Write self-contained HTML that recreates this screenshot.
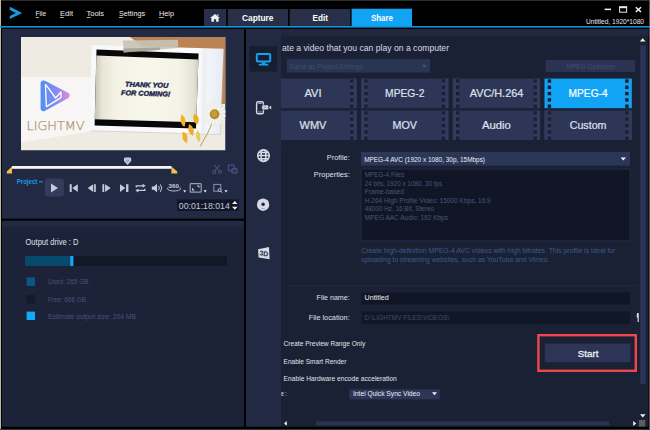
<!DOCTYPE html>
<html>
<head>
<meta charset="utf-8">
<title>Share</title>
<style>
html,body{margin:0;padding:0;background:#000;}
body{width:650px;height:430px;overflow:hidden;}
svg{display:block;}
svg text{font-family:"Liberation Sans",sans-serif;}
</style>
</head>
<body>
<svg width="650" height="430" viewBox="0 0 650 430">
<defs>
<linearGradient id="lg" gradientUnits="userSpaceOnUse" x1="40" y1="95" x2="72" y2="95"><stop offset="0" stop-color="#4b8ef6"/><stop offset="0.55" stop-color="#8c8cf0"/><stop offset="1" stop-color="#f58ccf"/></linearGradient>
<linearGradient id="scr" x1="0" y1="0" x2="1" y2="0"><stop offset="0" stop-color="#c4c4b6"/><stop offset="0.07" stop-color="#e6e5d6"/><stop offset="0.2" stop-color="#f3f2e4"/><stop offset="0.5" stop-color="#f8f7ec"/><stop offset="0.82" stop-color="#f3f2e4"/><stop offset="0.95" stop-color="#e4e3d5"/><stop offset="1" stop-color="#cdcdbf"/></linearGradient>
<linearGradient id="frm" x1="0" y1="0" x2="1" y2="0"><stop offset="0" stop-color="#f7f8fa"/><stop offset="0.8" stop-color="#fbfbfc"/><stop offset="1" stop-color="#e6ebf3"/></linearGradient>
<clipPath id="pv"><rect x="21" y="37" width="204.5" height="113.5"/></clipPath>
<clipPath id="mainclip"><rect x="281" y="29" width="358.5" height="398"/></clipPath>
</defs>

<rect x="0.0" y="0.0" width="650.0" height="430.0" fill="#000"/>
<rect x="0.0" y="0.0" width="650.0" height="1.0" fill="#2e2e2e"/>
<rect x="0.0" y="0.0" width="1.0" height="430.0" fill="#bdb9a8"/>
<rect x="649.0" y="0.0" width="1.0" height="430.0" fill="#55554f"/>
<rect x="0.0" y="429.0" width="650.0" height="1.0" fill="#333333"/>
<rect x="0.0" y="26.0" width="650.0" height="1.6" fill="#1192dc"/>
<path d="M9.8 6.8 L22.2 12.9 L9.8 19.1 L9.8 15.9 L15.9 12.9 L9.8 10 Z" fill="#149ce8"/>
<text x="35.5" y="16.4" font-size="7.6" fill="#ececec" text-anchor="start" textLength="10.7" lengthAdjust="spacingAndGlyphs">File</text>
<rect x="35.6" y="17.3" width="3.4" height="0.7" fill="#ececec"/>
<text x="60.0" y="16.4" font-size="7.6" fill="#ececec" text-anchor="start" textLength="13.0" lengthAdjust="spacingAndGlyphs">Edit</text>
<rect x="60.0" y="17.3" width="3.8" height="0.7" fill="#ececec"/>
<text x="86.5" y="16.4" font-size="7.6" fill="#ececec" text-anchor="start" textLength="17.5" lengthAdjust="spacingAndGlyphs">Tools</text>
<rect x="86.5" y="17.3" width="4.1" height="0.7" fill="#ececec"/>
<text x="119.0" y="16.4" font-size="7.6" fill="#ececec" text-anchor="start" textLength="26.0" lengthAdjust="spacingAndGlyphs">Settings</text>
<rect x="119.0" y="17.3" width="4.2" height="0.7" fill="#ececec"/>
<text x="159.0" y="16.4" font-size="7.6" fill="#ececec" text-anchor="start" textLength="15.0" lengthAdjust="spacingAndGlyphs">Help</text>
<rect x="159.0" y="17.3" width="4.8" height="0.7" fill="#ececec"/>
<rect x="204.0" y="9.0" width="22.2" height="17.0" fill="#283049"/>
<rect x="227.8" y="9.0" width="60.2" height="17.0" fill="#283049"/>
<rect x="289.7" y="9.0" width="60.6" height="17.0" fill="#283049"/>
<rect x="351.6" y="8.7" width="60.4" height="17.5" fill="#12a4f4"/>
<path d="M215 13.9 L219.9 18 L218.6 18 L218.6 21.7 L216.1 21.7 L216.1 19.3 L213.9 19.3 L213.9 21.7 L211.4 21.7 L211.4 18 L210.1 18 Z M217.2 14.3 h1.2 v1.9 l-1.2 -1z" fill="#eceef3"/>
<text x="242.0" y="20.6" font-size="9" fill="#ffffff" font-weight="bold" text-anchor="start" textLength="31.5" lengthAdjust="spacingAndGlyphs">Capture</text>
<text x="312.6" y="20.6" font-size="9" fill="#ffffff" font-weight="bold" text-anchor="start" textLength="15.4" lengthAdjust="spacingAndGlyphs">Edit</text>
<text x="371.0" y="20.6" font-size="9" fill="#ffffff" font-weight="bold" text-anchor="start" textLength="22.0" lengthAdjust="spacingAndGlyphs">Share</text>
<rect x="604.6" y="8.6" width="6.4" height="1.5" fill="#f0f0f0"/>
<rect x="619.6" y="7" width="7" height="5.2" fill="none" stroke="#e8e8e8" stroke-width="1"/>
<rect x="619.1" y="6.3" width="8.0" height="1.9" fill="#e8e8e8"/>
<path d="M635.8 7.2 L641 12 M641 7.2 L635.8 12" stroke="#f4f4f4" stroke-width="1.5" fill="none"/>
<text x="586.0" y="24.0" font-size="7.5" fill="#e8e8e8" text-anchor="start" textLength="58.0" lengthAdjust="spacingAndGlyphs">Untitled, 1920*1080</text>
<rect x="2.0" y="29.0" width="242.0" height="189.7" fill="#212943"/>
<rect x="2.0" y="220.8" width="242.0" height="206.0" fill="#1c2238"/>
<rect x="2.0" y="220.8" width="242.0" height="5.2" fill="#212943"/>
<rect x="2.0" y="226.0" width="242.0" height="1.6" fill="#1f2640"/>
<rect x="246.0" y="29.0" width="35.0" height="397.8" fill="#222a43"/>
<rect x="281.0" y="29.0" width="367.5" height="397.8" fill="#1b2135"/>
<rect x="281.0" y="29.0" width="367.5" height="6.6" fill="#20273e"/>
<g clip-path="url(#pv)">
<rect x="21.0" y="37.0" width="204.5" height="113.5" fill="#eeebe3"/>
<polygon points="130,37 225.5,37 225.5,104 200,104 150,52" fill="#ba8355"/>
<polygon points="21,77 93,77 93,131 21,142.5" fill="#f7f6f4"/>
<polygon points="92.5,46 224,49.7 221,135 90.7,131.2" fill="#c9c6bc" opacity="0.6"/>
<polygon points="91.5,45 223.4,48.7 220,133.9 89.7,130.2" fill="url(#frm)"/><polygon points="203,48.2 207,48.3 205,133.4 201,133.3" fill="#e3e8f1" opacity="0.5"/>
<polygon points="96.5,49.5 198.6,53.6 196,128.4 94.6,125.6" fill="#070707"/>
<polygon points="96.3,55.6 198.4,59.5 196.3,122.3 94.8,119.2" fill="url(#scr)"/>
<polygon points="123,40.6 178,39.8 178.2,48 123.6,52.6" fill="#c9c3b4" opacity="0.9"/><polygon points="123.4,48.6 160,47.4 160,50 123.6,52.6" fill="#9f9b90" opacity="0.8"/>
<g transform="rotate(1.7 146 90)">
<text x="125.0" y="87.2" font-size="6.9" fill="#1b1e4c" font-weight="bold" text-anchor="start" textLength="43.2" lengthAdjust="spacingAndGlyphs" font-style="italic" stroke="#1b1e4c" stroke-width="0.4">THANK YOU</text>
<text x="121.2" y="95.8" font-size="6.9" fill="#1b1e4c" font-weight="bold" text-anchor="start" textLength="49.2" lengthAdjust="spacingAndGlyphs" font-style="italic" stroke="#1b1e4c" stroke-width="0.4">FOR COMING!</text>
</g>
<path d="M213.5 120 Q208 134 200 146.5" stroke="#a89a5a" stroke-width="0.9" fill="none"/>
<g transform="translate(214.6 114.2)">
<ellipse cx="0" cy="-7.8" rx="1.5" ry="4.6" fill="#f4f3ee" stroke="#d9d8d0" stroke-width="0.25" transform="rotate(8)"/>
<ellipse cx="0" cy="-7.8" rx="1.5" ry="4.6" fill="#f4f3ee" stroke="#d9d8d0" stroke-width="0.25" transform="rotate(30)"/>
<ellipse cx="0" cy="-7.8" rx="1.5" ry="4.6" fill="#f4f3ee" stroke="#d9d8d0" stroke-width="0.25" transform="rotate(53)"/>
<ellipse cx="0" cy="-7.8" rx="1.5" ry="4.6" fill="#f4f3ee" stroke="#d9d8d0" stroke-width="0.25" transform="rotate(76)"/>
<ellipse cx="0" cy="-7.8" rx="1.5" ry="4.6" fill="#f4f3ee" stroke="#d9d8d0" stroke-width="0.25" transform="rotate(98)"/>
<ellipse cx="0" cy="-7.8" rx="1.5" ry="4.6" fill="#f4f3ee" stroke="#d9d8d0" stroke-width="0.25" transform="rotate(120)"/>
<ellipse cx="0" cy="-7.8" rx="1.5" ry="4.6" fill="#f4f3ee" stroke="#d9d8d0" stroke-width="0.25" transform="rotate(143)"/>
<ellipse cx="0" cy="-7.8" rx="1.5" ry="4.6" fill="#f4f3ee" stroke="#d9d8d0" stroke-width="0.25" transform="rotate(166)"/>
<ellipse cx="0" cy="-7.8" rx="1.5" ry="4.6" fill="#f4f3ee" stroke="#d9d8d0" stroke-width="0.25" transform="rotate(188)"/>
<ellipse cx="0" cy="-7.8" rx="1.5" ry="4.6" fill="#f4f3ee" stroke="#d9d8d0" stroke-width="0.25" transform="rotate(210)"/>
<ellipse cx="0" cy="-7.8" rx="1.5" ry="4.6" fill="#f4f3ee" stroke="#d9d8d0" stroke-width="0.25" transform="rotate(233)"/>
<ellipse cx="0" cy="-7.8" rx="1.5" ry="4.6" fill="#f4f3ee" stroke="#d9d8d0" stroke-width="0.25" transform="rotate(256)"/>
<ellipse cx="0" cy="-7.8" rx="1.5" ry="4.6" fill="#f4f3ee" stroke="#d9d8d0" stroke-width="0.25" transform="rotate(278)"/>
<ellipse cx="0" cy="-7.8" rx="1.5" ry="4.6" fill="#f4f3ee" stroke="#d9d8d0" stroke-width="0.25" transform="rotate(300)"/>
<ellipse cx="0" cy="-7.8" rx="1.5" ry="4.6" fill="#f4f3ee" stroke="#d9d8d0" stroke-width="0.25" transform="rotate(323)"/>
<ellipse cx="0" cy="-7.8" rx="1.5" ry="4.6" fill="#f4f3ee" stroke="#d9d8d0" stroke-width="0.25" transform="rotate(346)"/>
<ellipse cx="0" cy="0" rx="4.8" ry="5" fill="#b58a2c"/><ellipse cx="-0.4" cy="-0.5" rx="2.9" ry="3.1" fill="#c89d38"/>
</g>
<path d="M0 -6.5 Q4.8 -0.975 0 6.5 Q-4.8 0.975 0 -6.5Z" fill="#f3b321" transform="translate(183 120.6) rotate(-12)"/>
<path d="M0 -5.6 Q5.6 -0.84 0 5.6 Q-5.6 0.84 0 -5.6Z" fill="#f2ab1f" transform="translate(196 119) rotate(-18)"/>
<path d="M0 -6.2 Q5.2 -0.9299999999999999 0 6.2 Q-5.2 0.9299999999999999 0 -6.2Z" fill="#f2ab1f" transform="translate(191 130) rotate(-18)"/>
<path d="M0 -6.2 Q5.2 -0.9299999999999999 0 6.2 Q-5.2 0.9299999999999999 0 -6.2Z" fill="#f3b021" transform="translate(185 137.4) rotate(-18)"/>
<path d="M0 -6.2 Q4.4 -0.9299999999999999 0 6.2 Q-4.4 0.9299999999999999 0 -6.2Z" fill="#efc75a" transform="translate(198.3 136) rotate(-10)"/>
<polygon points="43.6,83.4 66.6,95.5 43.6,108.2" fill="url(#lg)" stroke="url(#lg)" stroke-width="6" stroke-linejoin="round"/>
<path d="M45.4 84.2 L46.4 106.6 L61 97.6 L61 92 L55.6 98 L45.4 84.2" fill="none" stroke="#ffffff" stroke-width="1.3" stroke-linejoin="round"/>
<text x="26.5" y="129.6" font-size="12.2" fill="#b1946d" font-weight="200" text-anchor="start" textLength="58.1" lengthAdjust="spacingAndGlyphs" style="font-family:'DejaVu Sans',sans-serif;font-weight:200" stroke="#b1946d" stroke-width="0.25">LIGHTMV</text>
</g>
<rect x="12.0" y="166.0" width="159.5" height="2.8" fill="#f4f4f4"/>
<polygon points="12,166.6 12,173.6 6.8,173.6 6.8,171.4" fill="#f3bf4c"/>
<polygon points="171.4,166.6 177.2,171.4 177.2,173.6 171.4,173.6" fill="#f3bf4c"/>
<path d="M124 158.8 Q124 157.6 125.2 157.6 L129.8 157.6 Q131.2 157.6 131.2 158.8 L131.2 161 L127.6 165 L124 161 Z" fill="#c9cde0"/>
<path d="M125.6 159.6 L129.6 159.6 L129.6 160.8 L127.6 163 L125.6 160.8 Z" fill="#9ea4bf"/>
<g stroke="#43527e" fill="none" stroke-width="1.1"><path d="M214.2 165 L219 171 M219.6 165 L215 170.6"/><circle cx="214.2" cy="172" r="1.5"/><circle cx="220" cy="171.8" r="1.5"/></g>
<g stroke="#43527e" fill="none" stroke-width="1.2"><rect x="228.4" y="165.2" width="6" height="5.6" rx="0.8"/><rect x="232" y="168.6" width="5" height="4.6" rx="0.8" fill="#2b3657"/></g>
<text x="16.7" y="183.6" font-size="7" fill="#1a9be8" font-weight="bold" text-anchor="start" textLength="20.7" lengthAdjust="spacingAndGlyphs">Project</text>
<rect x="39.0" y="181.2" width="3.6" height="1.1" fill="#1a9be8"/>
<rect x="44.8" y="178.6" width="19.2" height="18" rx="3" fill="#323c5d"/>
<polygon points="51,183.6 58,188 51,192.6" fill="#c6cbd9"/>
<rect x="69.7" y="184.2" width="2.0" height="7.8" fill="#c6cbd9"/>
<polygon points="77.8,184.2 77.8,192 72.3,188.1" fill="#c6cbd9"/>
<polygon points="93.2,184.2 93.2,192 87.7,188.1" fill="#c6cbd9"/>
<rect x="94.1" y="184.2" width="1.7" height="7.8" fill="#c6cbd9"/>
<rect x="102.4" y="184.2" width="1.8" height="7.8" fill="#c6cbd9"/>
<polygon points="105.1,184.2 105.1,192 110.7,188.1" fill="#c6cbd9"/>
<polygon points="120,184.2 120,192 125.4,188.1" fill="#c6cbd9"/>
<rect x="126.1" y="184.2" width="2.3" height="7.8" fill="#c6cbd9"/>
<g fill="none" stroke="#c6cbd9" stroke-width="1.3"><path d="M136.3 187.4 L136.3 185.8 L143.4 185.8"/><path d="M144.8 188.8 L144.8 190.4 L137.6 190.4"/></g>
<polygon points="142.6,183.8 145.6,185.8 142.6,187.8" fill="#c6cbd9"/><polygon points="138.4,188.4 135.4,190.4 138.4,192.4" fill="#c6cbd9"/>
<polygon points="151.8,186.4 154,186.4 157,183.8 157,192.4 154,189.8 151.8,189.8" fill="#c6cbd9"/>
<g fill="none" stroke="#c6cbd9" stroke-width="1"><path d="M158.6 186 Q160 188.1 158.6 190.2"/><path d="M160.4 184.4 Q163 188.1 160.4 191.8"/></g>
<ellipse cx="174" cy="188.6" rx="6.6" ry="2.4" fill="none" stroke="#c6cbd9" stroke-width="0.9"/>
<rect x="168.4" y="183.4" width="11.2" height="5.0" fill="#212943"/>
<text x="168.6" y="188.2" font-size="5.6" fill="#c6cbd9" font-weight="bold" text-anchor="start" textLength="10.4" lengthAdjust="spacingAndGlyphs">360</text>
<polygon points="183.2,190.2 186.2,190.2 184.7,192.6" fill="#eceef4"/>
<rect x="190.2" y="183.6" width="11" height="8.6" rx="0.8" fill="none" stroke="#979eb5" stroke-width="1.2"/>
<polygon points="196.6,185.4 199.4,185.4 199.4,188" fill="#c6cbd9"/><polygon points="192,187.8 192,190.4 194.8,190.4" fill="#c6cbd9"/>
<polygon points="203.6,190.2 206.8,190.2 205.2,192.6" fill="#eceef4"/>
<rect x="213.8" y="184.4" width="7" height="6.8" fill="none" stroke="#8d94ad" stroke-width="1"/>
<circle cx="219.6" cy="190" r="1.5" fill="#212943" stroke="#c6cbd9" stroke-width="0.9"/><path d="M220.6 191 L222.4 192.8" stroke="#c6cbd9" stroke-width="1"/>
<polygon points="224.4,190.2 227.6,190.2 226,192.6" fill="#eceef4"/>
<rect x="177.0" y="199.4" width="61.6" height="11.6" fill="#11162a"/>
<text x="178.8" y="208.8" font-size="8.6" fill="#c3c9d9" text-anchor="start" textLength="51.0" lengthAdjust="spacingAndGlyphs">00:01:18:014</text>
<polygon points="232,204 237.6,204 234.8,201" fill="#f0f0f0"/><polygon points="232,206.8 237.6,206.8 234.8,209.8" fill="#f0f0f0"/>
<text x="25.5" y="244.6" font-size="8.2" fill="#dfe2ea" text-anchor="start" textLength="52.9" lengthAdjust="spacingAndGlyphs">Output drive : D</text>
<rect x="25.0" y="256.0" width="202.0" height="10.0" fill="#131829"/>
<rect x="25.0" y="256.0" width="45.2" height="10.0" fill="#064a6b"/>
<rect x="70.2" y="256.0" width="3.2" height="10.0" fill="#14a9f6"/>
<rect x="26.6" y="277.4" width="8.4" height="8.6" fill="#0a587f"/>
<rect x="26.6" y="295.0" width="8.4" height="8.4" fill="#141a2d"/>
<rect x="26.6" y="311.6" width="8.4" height="8.4" fill="#14a9f6"/>
<text x="48.0" y="284.4" font-size="7" fill="#46527a" text-anchor="start" textLength="40.6" lengthAdjust="spacingAndGlyphs">Used:  265 GB</text>
<text x="48.0" y="301.6" font-size="7" fill="#46527a" text-anchor="start" textLength="38.0" lengthAdjust="spacingAndGlyphs">Free:  666 GB</text>
<text x="48.0" y="318.6" font-size="7" fill="#46527a" text-anchor="start" textLength="88.0" lengthAdjust="spacingAndGlyphs">Estimate output size:  204 MB</text>
<rect x="249.4" y="46.0" width="27.8" height="25.6" fill="#181d30"/>
<rect x="256.8" y="54" width="13.4" height="7.6" rx="1" fill="none" stroke="#12a4f4" stroke-width="2"/>
<path d="M261.8 62.4 h3.4 l0.6 1.5 h2.4 v1.7 h-9.4 v-1.7 h2.4z" fill="#12a4f4"/>
<rect x="256.6" y="101.8" width="6.8" height="12" rx="1.6" fill="none" stroke="#d6dae6" stroke-width="1.4"/>
<rect x="258.2" y="103.2" width="3.6" height="0.7" fill="#d6dae6"/>
<rect x="258.2" y="111.6" width="3.6" height="0.7" fill="#d6dae6"/>
<rect x="261.8" y="105" width="6.8" height="4.8" rx="1" fill="#d6dae6" stroke="#222a43" stroke-width="0.6"/>
<polygon points="268.8,107.4 271.2,105.4 271.2,109.4" fill="#d6dae6"/>
<rect x="263.6" y="106.8" width="3.0" height="1.0" fill="#8f95aa"/>
<g fill="none" stroke="#d6dae6" stroke-width="1.5"><circle cx="263.5" cy="155.6" r="5.8"/><ellipse cx="263.5" cy="155.6" rx="2.4" ry="5.9"/><path d="M257.6 155.6 h11.8 M258.6 152.4 h9.8 M258.6 158.8 h9.8"/></g>
<circle cx="263.1" cy="204.7" r="6.2" fill="#d6dae6"/><circle cx="263.1" cy="204.2" r="1.7" fill="#1c2238"/>
<rect x="261.4" y="208.0" width="3.4" height="0.9" fill="#9aa0b5"/>
<polygon points="258,249.2 269,247 269.6,259.2 258.6,257.4" fill="#d6dae6"/>
<text x="259.6" y="256.0" font-size="7" fill="#222a43" font-weight="bold" text-anchor="start" textLength="8.6" lengthAdjust="spacingAndGlyphs" transform="rotate(8 264 253)">3D</text>
<g clip-path="url(#mainclip)">
<text x="282.0" y="50.8" font-size="8.8" fill="#d8dce7" text-anchor="start" textLength="167.0" lengthAdjust="spacingAndGlyphs">ate a video that you can play on a computer</text>
<rect x="287.0" y="59.0" width="143.0" height="13.6" fill="#2a3453"/>
<text x="289.6" y="69.2" font-size="7.8" fill="#404c72" text-anchor="start" textLength="73.0" lengthAdjust="spacingAndGlyphs">Same as Project Settings</text>
<polygon points="422,64.8 426.6,64.8 424.3,68" fill="#46527a"/>
<rect x="545.6" y="60.0" width="89.6" height="12.0" fill="#2a3352"/>
<text x="566.4" y="69.0" font-size="7.8" fill="#414d71" text-anchor="start" textLength="49.4" lengthAdjust="spacingAndGlyphs">MPEG Optimizer</text>
<rect x="269.4" y="78.6" width="87.3" height="29.6" fill="#2d3657"/>
<rect x="269.4" y="78.6" width="6.6" height="29.6" fill="#323b5c"/>
<rect x="350.1" y="78.6" width="6.6" height="29.6" fill="#323b5c"/>
<rect x="272.6" y="79.3" width="3.4" height="3.4" fill="#1a2034"/>
<rect x="350.1" y="79.3" width="3.4" height="3.4" fill="#1a2034"/>
<rect x="272.6" y="85.6" width="3.4" height="3.4" fill="#1a2034"/>
<rect x="350.1" y="85.6" width="3.4" height="3.4" fill="#1a2034"/>
<rect x="272.6" y="91.9" width="3.4" height="3.4" fill="#1a2034"/>
<rect x="350.1" y="91.9" width="3.4" height="3.4" fill="#1a2034"/>
<rect x="272.6" y="98.2" width="3.4" height="3.4" fill="#1a2034"/>
<rect x="350.1" y="98.2" width="3.4" height="3.4" fill="#1a2034"/>
<rect x="272.6" y="104.5" width="3.4" height="3.4" fill="#1a2034"/>
<rect x="350.1" y="104.5" width="3.4" height="3.4" fill="#1a2034"/>
<text x="313.0" y="96.9" font-size="10.2" fill="#dee1eb" text-anchor="middle" textLength="17.0" lengthAdjust="spacingAndGlyphs" stroke="#dee1eb" stroke-width="0.2">AVI</text>
<rect x="361.1" y="78.6" width="87.3" height="29.6" fill="#2d3657"/>
<rect x="361.1" y="78.6" width="6.6" height="29.6" fill="#323b5c"/>
<rect x="441.8" y="78.6" width="6.6" height="29.6" fill="#323b5c"/>
<rect x="364.3" y="79.3" width="3.4" height="3.4" fill="#1a2034"/>
<rect x="441.8" y="79.3" width="3.4" height="3.4" fill="#1a2034"/>
<rect x="364.3" y="85.6" width="3.4" height="3.4" fill="#1a2034"/>
<rect x="441.8" y="85.6" width="3.4" height="3.4" fill="#1a2034"/>
<rect x="364.3" y="91.9" width="3.4" height="3.4" fill="#1a2034"/>
<rect x="441.8" y="91.9" width="3.4" height="3.4" fill="#1a2034"/>
<rect x="364.3" y="98.2" width="3.4" height="3.4" fill="#1a2034"/>
<rect x="441.8" y="98.2" width="3.4" height="3.4" fill="#1a2034"/>
<rect x="364.3" y="104.5" width="3.4" height="3.4" fill="#1a2034"/>
<rect x="441.8" y="104.5" width="3.4" height="3.4" fill="#1a2034"/>
<text x="404.8" y="96.9" font-size="10.2" fill="#dee1eb" text-anchor="middle" textLength="39.4" lengthAdjust="spacingAndGlyphs" stroke="#dee1eb" stroke-width="0.2">MPEG-2</text>
<rect x="452.8" y="78.6" width="87.3" height="29.6" fill="#2d3657"/>
<rect x="452.8" y="78.6" width="6.6" height="29.6" fill="#323b5c"/>
<rect x="533.5" y="78.6" width="6.6" height="29.6" fill="#323b5c"/>
<rect x="456.0" y="79.3" width="3.4" height="3.4" fill="#1a2034"/>
<rect x="533.5" y="79.3" width="3.4" height="3.4" fill="#1a2034"/>
<rect x="456.0" y="85.6" width="3.4" height="3.4" fill="#1a2034"/>
<rect x="533.5" y="85.6" width="3.4" height="3.4" fill="#1a2034"/>
<rect x="456.0" y="91.9" width="3.4" height="3.4" fill="#1a2034"/>
<rect x="533.5" y="91.9" width="3.4" height="3.4" fill="#1a2034"/>
<rect x="456.0" y="98.2" width="3.4" height="3.4" fill="#1a2034"/>
<rect x="533.5" y="98.2" width="3.4" height="3.4" fill="#1a2034"/>
<rect x="456.0" y="104.5" width="3.4" height="3.4" fill="#1a2034"/>
<rect x="533.5" y="104.5" width="3.4" height="3.4" fill="#1a2034"/>
<text x="496.5" y="96.9" font-size="10.2" fill="#dee1eb" text-anchor="middle" textLength="53.5" lengthAdjust="spacingAndGlyphs" stroke="#dee1eb" stroke-width="0.2">AVC/H.264</text>
<rect x="544.5" y="78.6" width="87.3" height="29.6" fill="#12a4f4"/>
<rect x="547.7" y="79.3" width="3.4" height="3.4" fill="#161a2b"/>
<rect x="625.2" y="79.3" width="3.4" height="3.4" fill="#161a2b"/>
<rect x="547.7" y="85.6" width="3.4" height="3.4" fill="#161a2b"/>
<rect x="625.2" y="85.6" width="3.4" height="3.4" fill="#161a2b"/>
<rect x="547.7" y="91.9" width="3.4" height="3.4" fill="#161a2b"/>
<rect x="625.2" y="91.9" width="3.4" height="3.4" fill="#161a2b"/>
<rect x="547.7" y="98.2" width="3.4" height="3.4" fill="#161a2b"/>
<rect x="625.2" y="98.2" width="3.4" height="3.4" fill="#161a2b"/>
<rect x="547.7" y="104.5" width="3.4" height="3.4" fill="#161a2b"/>
<rect x="625.2" y="104.5" width="3.4" height="3.4" fill="#161a2b"/>
<text x="588.1" y="96.9" font-size="10.2" fill="#ffffff" text-anchor="middle" textLength="39.0" lengthAdjust="spacingAndGlyphs" stroke="#ffffff" stroke-width="0.2">MPEG-4</text>
<rect x="269.4" y="110.6" width="87.3" height="29.4" fill="#2d3657"/>
<rect x="269.4" y="110.6" width="6.6" height="29.4" fill="#323b5c"/>
<rect x="350.1" y="110.6" width="6.6" height="29.4" fill="#323b5c"/>
<rect x="272.6" y="111.3" width="3.4" height="3.4" fill="#1a2034"/>
<rect x="350.1" y="111.3" width="3.4" height="3.4" fill="#1a2034"/>
<rect x="272.6" y="117.6" width="3.4" height="3.4" fill="#1a2034"/>
<rect x="350.1" y="117.6" width="3.4" height="3.4" fill="#1a2034"/>
<rect x="272.6" y="123.9" width="3.4" height="3.4" fill="#1a2034"/>
<rect x="350.1" y="123.9" width="3.4" height="3.4" fill="#1a2034"/>
<rect x="272.6" y="130.2" width="3.4" height="3.4" fill="#1a2034"/>
<rect x="350.1" y="130.2" width="3.4" height="3.4" fill="#1a2034"/>
<rect x="272.6" y="136.5" width="3.4" height="3.4" fill="#1a2034"/>
<rect x="350.1" y="136.5" width="3.4" height="3.4" fill="#1a2034"/>
<text x="313.0" y="129.4" font-size="10.2" fill="#dee1eb" text-anchor="middle" textLength="26.8" lengthAdjust="spacingAndGlyphs" stroke="#dee1eb" stroke-width="0.2">WMV</text>
<rect x="361.1" y="110.6" width="87.3" height="29.4" fill="#2d3657"/>
<rect x="361.1" y="110.6" width="6.6" height="29.4" fill="#323b5c"/>
<rect x="441.8" y="110.6" width="6.6" height="29.4" fill="#323b5c"/>
<rect x="364.3" y="111.3" width="3.4" height="3.4" fill="#1a2034"/>
<rect x="441.8" y="111.3" width="3.4" height="3.4" fill="#1a2034"/>
<rect x="364.3" y="117.6" width="3.4" height="3.4" fill="#1a2034"/>
<rect x="441.8" y="117.6" width="3.4" height="3.4" fill="#1a2034"/>
<rect x="364.3" y="123.9" width="3.4" height="3.4" fill="#1a2034"/>
<rect x="441.8" y="123.9" width="3.4" height="3.4" fill="#1a2034"/>
<rect x="364.3" y="130.2" width="3.4" height="3.4" fill="#1a2034"/>
<rect x="441.8" y="130.2" width="3.4" height="3.4" fill="#1a2034"/>
<rect x="364.3" y="136.5" width="3.4" height="3.4" fill="#1a2034"/>
<rect x="441.8" y="136.5" width="3.4" height="3.4" fill="#1a2034"/>
<text x="404.8" y="129.4" font-size="10.2" fill="#dee1eb" text-anchor="middle" textLength="24.4" lengthAdjust="spacingAndGlyphs" stroke="#dee1eb" stroke-width="0.2">MOV</text>
<rect x="452.8" y="110.6" width="87.3" height="29.4" fill="#2d3657"/>
<rect x="452.8" y="110.6" width="6.6" height="29.4" fill="#323b5c"/>
<rect x="533.5" y="110.6" width="6.6" height="29.4" fill="#323b5c"/>
<rect x="456.0" y="111.3" width="3.4" height="3.4" fill="#1a2034"/>
<rect x="533.5" y="111.3" width="3.4" height="3.4" fill="#1a2034"/>
<rect x="456.0" y="117.6" width="3.4" height="3.4" fill="#1a2034"/>
<rect x="533.5" y="117.6" width="3.4" height="3.4" fill="#1a2034"/>
<rect x="456.0" y="123.9" width="3.4" height="3.4" fill="#1a2034"/>
<rect x="533.5" y="123.9" width="3.4" height="3.4" fill="#1a2034"/>
<rect x="456.0" y="130.2" width="3.4" height="3.4" fill="#1a2034"/>
<rect x="533.5" y="130.2" width="3.4" height="3.4" fill="#1a2034"/>
<rect x="456.0" y="136.5" width="3.4" height="3.4" fill="#1a2034"/>
<rect x="533.5" y="136.5" width="3.4" height="3.4" fill="#1a2034"/>
<text x="496.4" y="129.4" font-size="10.2" fill="#dee1eb" text-anchor="middle" textLength="28.8" lengthAdjust="spacingAndGlyphs" stroke="#dee1eb" stroke-width="0.2">Audio</text>
<rect x="544.5" y="110.6" width="87.3" height="29.4" fill="#2d3657"/>
<rect x="544.5" y="110.6" width="6.6" height="29.4" fill="#323b5c"/>
<rect x="625.2" y="110.6" width="6.6" height="29.4" fill="#323b5c"/>
<rect x="547.7" y="111.3" width="3.4" height="3.4" fill="#1a2034"/>
<rect x="625.2" y="111.3" width="3.4" height="3.4" fill="#1a2034"/>
<rect x="547.7" y="117.6" width="3.4" height="3.4" fill="#1a2034"/>
<rect x="625.2" y="117.6" width="3.4" height="3.4" fill="#1a2034"/>
<rect x="547.7" y="123.9" width="3.4" height="3.4" fill="#1a2034"/>
<rect x="625.2" y="123.9" width="3.4" height="3.4" fill="#1a2034"/>
<rect x="547.7" y="130.2" width="3.4" height="3.4" fill="#1a2034"/>
<rect x="625.2" y="130.2" width="3.4" height="3.4" fill="#1a2034"/>
<rect x="547.7" y="136.5" width="3.4" height="3.4" fill="#1a2034"/>
<rect x="625.2" y="136.5" width="3.4" height="3.4" fill="#1a2034"/>
<text x="588.1" y="129.4" font-size="10.2" fill="#dee1eb" text-anchor="middle" textLength="36.8" lengthAdjust="spacingAndGlyphs" stroke="#dee1eb" stroke-width="0.2">Custom</text>
<rect x="281.0" y="148.3" width="367.0" height="0.7" fill="#1f2539"/>
<text x="326.8" y="160.0" font-size="7.8" fill="#dde1ec" text-anchor="start" textLength="23.0" lengthAdjust="spacingAndGlyphs">Profile:</text>
<rect x="361.0" y="152.0" width="269.0" height="13.6" fill="#2c3657"/>
<text x="364.2" y="161.8" font-size="7.6" fill="#eceef5" text-anchor="start" textLength="120.8" lengthAdjust="spacingAndGlyphs">MPEG-4 AVC (1920 x 1080, 30p, 15Mbps)</text>
<polygon points="620.6,157.4 626,157.4 623.3,160.6" fill="#f2f2f2"/>
<text x="313.8" y="177.0" font-size="7.8" fill="#dde1ec" text-anchor="start" textLength="36.0" lengthAdjust="spacingAndGlyphs">Properties:</text>
<rect x="361" y="169" width="269" height="71.8" fill="#111627" stroke="#242c46" stroke-width="0.9"/>
<text x="364.8" y="177.1" font-size="7.4" fill="#49557a" text-anchor="start" textLength="39.5" lengthAdjust="spacingAndGlyphs">MPEG-4 Files</text>
<text x="364.8" y="185.6" font-size="7.4" fill="#49557a" text-anchor="start" textLength="77.4" lengthAdjust="spacingAndGlyphs">24 bits, 1920 x 1080, 30 fps</text>
<text x="364.8" y="194.1" font-size="7.4" fill="#49557a" text-anchor="start" textLength="39.0" lengthAdjust="spacingAndGlyphs">Frame-based</text>
<text x="364.8" y="202.6" font-size="7.4" fill="#49557a" text-anchor="start" textLength="125.9" lengthAdjust="spacingAndGlyphs">H.264 High Profile Video: 15000 Kbps, 16:9</text>
<text x="364.8" y="211.1" font-size="7.4" fill="#49557a" text-anchor="start" textLength="69.2" lengthAdjust="spacingAndGlyphs">48000 Hz, 16 Bit, Stereo</text>
<text x="364.8" y="219.6" font-size="7.4" fill="#49557a" text-anchor="start" textLength="83.2" lengthAdjust="spacingAndGlyphs">MPEG AAC Audio: 192 Kbps</text>
<text x="361.3" y="253.4" font-size="7.4" fill="#3b598b" text-anchor="start" textLength="254.1" lengthAdjust="spacingAndGlyphs">Create high-definition MPEG-4 AVC videos with high bitrates. This profile is ideal for</text>
<text x="361.3" y="261.6" font-size="7.4" fill="#3b598b" text-anchor="start" textLength="188.1" lengthAdjust="spacingAndGlyphs">uploading to streaming websites, such as YouTube and Vimeo.</text>
<rect x="288.0" y="285.2" width="352.0" height="0.8" fill="#232a41"/>
<text x="316.6" y="300.2" font-size="7.8" fill="#dde1ec" text-anchor="start" textLength="33.1" lengthAdjust="spacingAndGlyphs">File name:</text>
<rect x="361.6" y="292.5" width="268.4" height="11.9" fill="#111627"/>
<text x="364.6" y="300.4" font-size="7.6" fill="#f2f3f7" text-anchor="start" textLength="24.0" lengthAdjust="spacingAndGlyphs">Untitled</text>
<text x="308.7" y="319.8" font-size="7.8" fill="#dde1ec" text-anchor="start" textLength="41.0" lengthAdjust="spacingAndGlyphs">File location:</text>
<rect x="361.6" y="311.4" width="268.4" height="13.0" fill="#121728"/>
<text x="364.6" y="320.2" font-size="7.2" fill="#3f4a6c" text-anchor="start" textLength="84.4" lengthAdjust="spacingAndGlyphs">D:\LIGHTMV FILES\VIDEOS\</text>
<path d="M637 313 L638.8 313 L638.8 322 L637.6 322 L637.6 318 L636.6 317 Z" fill="#d8dbe4"/>
<text x="283.6" y="346.3" font-size="7.6" fill="#e1e4ed" text-anchor="start" textLength="81.6" lengthAdjust="spacingAndGlyphs">Create Preview Range Only</text>
<text x="283.6" y="363.5" font-size="7.6" fill="#e1e4ed" text-anchor="start" textLength="62.8" lengthAdjust="spacingAndGlyphs">Enable Smart Render</text>
<text x="283.6" y="380.6" font-size="7.6" fill="#e1e4ed" text-anchor="start" textLength="113.2" lengthAdjust="spacingAndGlyphs">Enable Hardware encode acceleration</text>
<text x="281.0" y="395.6" font-size="7.6" fill="#e1e4ed" text-anchor="start" textLength="5.8" lengthAdjust="spacingAndGlyphs">e :</text>
<rect x="349.5" y="389.4" width="90.3" height="10.0" fill="#2c3657"/>
<text x="353.0" y="396.2" font-size="7.6" fill="#eceef5" text-anchor="start" textLength="67.0" lengthAdjust="spacingAndGlyphs">Intel Quick Sync Video</text>
<polygon points="432,392.2 437,392.2 434.5,395.2" fill="#f2f2f2"/>
<rect x="538.4" y="335.2" width="97.4" height="35.6" fill="none" stroke="#ef474d" stroke-width="2.4"/>
<rect x="544.8" y="343.6" width="85.5" height="18.6" fill="#2c3555"/>
<text x="577.8" y="356.8" font-size="9.6" fill="#eceef5" text-anchor="start" textLength="20.8" lengthAdjust="spacingAndGlyphs" stroke="#eceef5" stroke-width="0.3">Start</text>
<polygon points="286.8,421 286.8,425.8 284,423.4" fill="#f0f0f0"/>
<rect x="316.3" y="421.4" width="293.0" height="4.2" fill="#2a3352"/>
<polygon points="633.2,421 633.2,426 636.2,423.5" fill="#f0f0f0"/>
</g>
<polygon points="639.8,41.4 645.6,41.4 642.7,38.2" fill="#f0f0f0"/>
<rect x="640.3" y="45.4" width="5.5" height="338.6" fill="#2b3454"/>
<polygon points="640,414.2 645.6,414.2 642.8,417.6" fill="#f0f0f0"/>
<rect x="638.8" y="420.0" width="6.4" height="6.6" fill="#5a5e55"/>
</svg>
</body>
</html>
